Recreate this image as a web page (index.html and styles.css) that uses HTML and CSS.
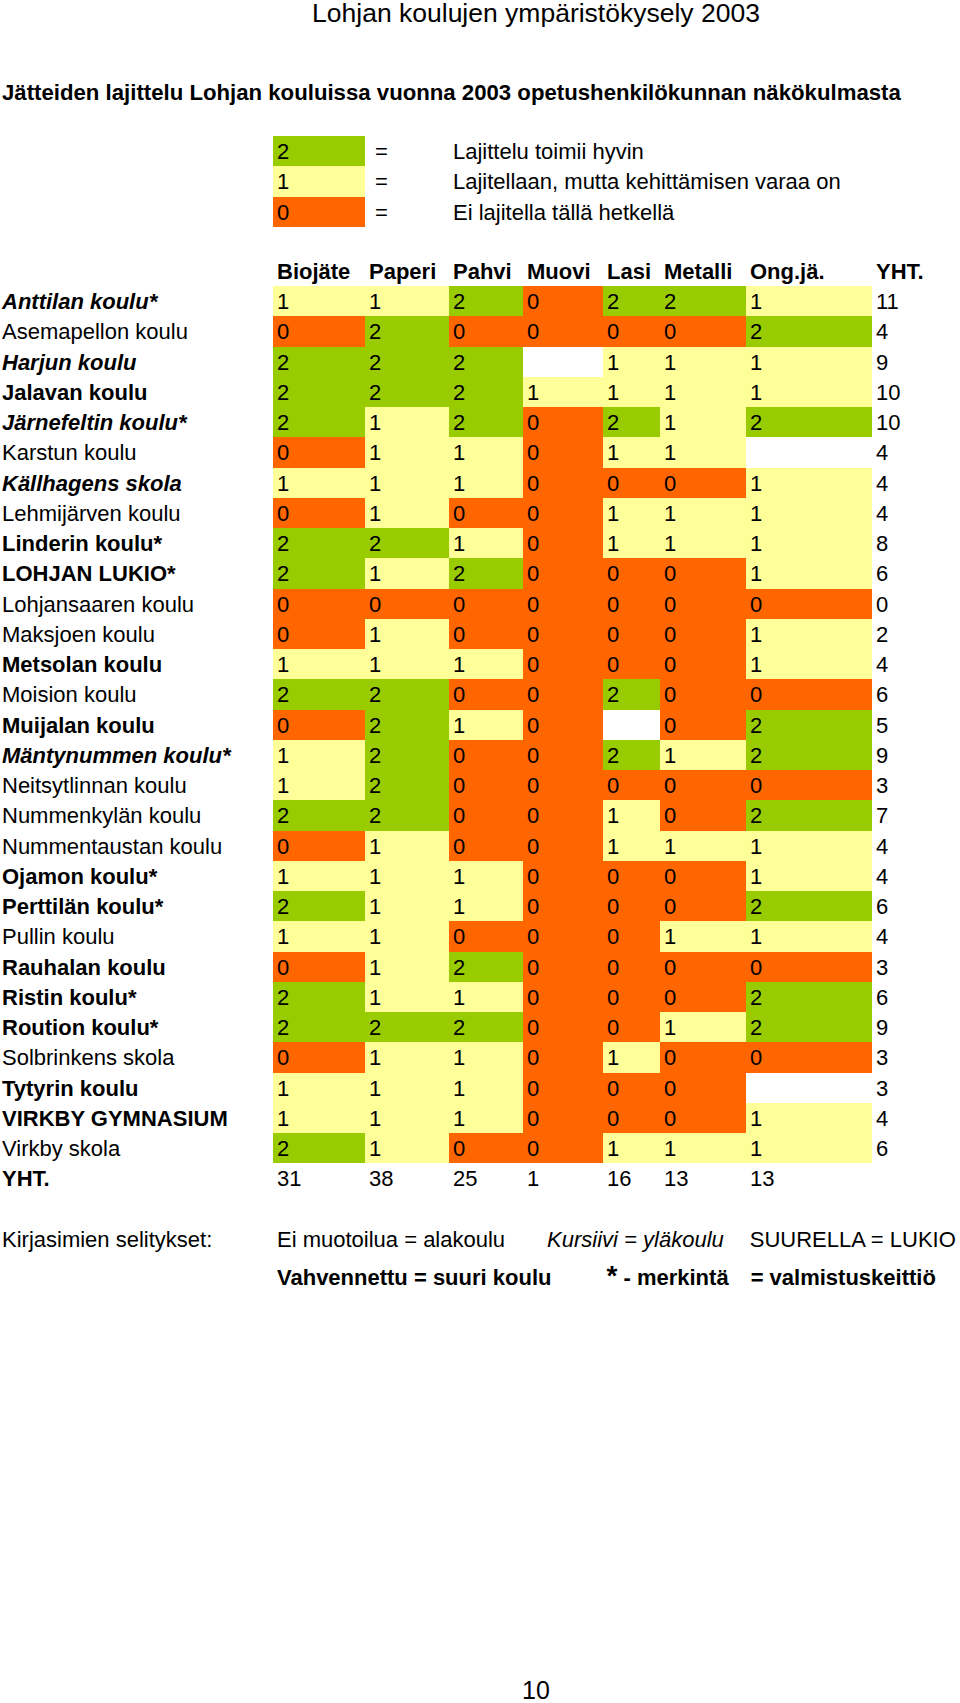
FILE: index.html
```html
<!DOCTYPE html>
<html lang="fi">
<head>
<meta charset="utf-8">
<title>Lohjan koulujen ympäristökysely 2003</title>
<link rel="stylesheet" href="styles.css">
</head>
<body>
<div class="page">
  <h1 class="title">Lohjan koulujen ympäristökysely 2003</h1>
  <h2 class="heading">Jätteiden lajittelu Lohjan kouluissa vuonna 2003 opetushenkilökunnan näkökulmasta</h2>

  <div class="legend">
    <div class="sw g">2</div><div class="eq">=</div><div class="lt">Lajittelu toimii hyvin</div>
    <div class="sw y">1</div><div class="eq">=</div><div class="lt">Lajitellaan, mutta kehittämisen varaa on</div>
    <div class="sw o">0</div><div class="eq">=</div><div class="lt">Ei lajitella tällä hetkellä</div>
  </div>

  <table class="data">
    <colgroup>
      <col class="c-name"><col class="c-bio"><col class="c-pap"><col class="c-pah"><col class="c-muo"><col class="c-las"><col class="c-met"><col class="c-ong"><col class="c-yht">
    </colgroup>
    <thead>
      <tr><th></th><th>Biojäte</th><th>Paperi</th><th>Pahvi</th><th>Muovi</th><th>Lasi</th><th>Metalli</th><th>Ong.jä.</th><th>YHT.</th></tr>
    </thead>
    <tbody>
      <tr><td class="bi">Anttilan koulu*</td><td class="y">1</td><td class="y">1</td><td class="g">2</td><td class="o">0</td><td class="g">2</td><td class="g">2</td><td class="y">1</td><td>11</td></tr>
      <tr><td>Asemapellon koulu</td><td class="o">0</td><td class="g">2</td><td class="o">0</td><td class="o">0</td><td class="o">0</td><td class="o">0</td><td class="g">2</td><td>4</td></tr>
      <tr><td class="bi">Harjun koulu</td><td class="g">2</td><td class="g">2</td><td class="g">2</td><td></td><td class="y">1</td><td class="y">1</td><td class="y">1</td><td>9</td></tr>
      <tr><td class="b">Jalavan koulu</td><td class="g">2</td><td class="g">2</td><td class="g">2</td><td class="y">1</td><td class="y">1</td><td class="y">1</td><td class="y">1</td><td>10</td></tr>
      <tr><td class="bi">Järnefeltin koulu*</td><td class="g">2</td><td class="y">1</td><td class="g">2</td><td class="o">0</td><td class="g">2</td><td class="y">1</td><td class="g">2</td><td>10</td></tr>
      <tr><td>Karstun koulu</td><td class="o">0</td><td class="y">1</td><td class="y">1</td><td class="o">0</td><td class="y">1</td><td class="y">1</td><td></td><td>4</td></tr>
      <tr><td class="bi">Källhagens skola</td><td class="y">1</td><td class="y">1</td><td class="y">1</td><td class="o">0</td><td class="o">0</td><td class="o">0</td><td class="y">1</td><td>4</td></tr>
      <tr><td>Lehmijärven koulu</td><td class="o">0</td><td class="y">1</td><td class="o">0</td><td class="o">0</td><td class="y">1</td><td class="y">1</td><td class="y">1</td><td>4</td></tr>
      <tr><td class="b">Linderin koulu*</td><td class="g">2</td><td class="g">2</td><td class="y">1</td><td class="o">0</td><td class="y">1</td><td class="y">1</td><td class="y">1</td><td>8</td></tr>
      <tr><td class="b">LOHJAN LUKIO*</td><td class="g">2</td><td class="y">1</td><td class="g">2</td><td class="o">0</td><td class="o">0</td><td class="o">0</td><td class="y">1</td><td>6</td></tr>
      <tr><td>Lohjansaaren koulu</td><td class="o">0</td><td class="o">0</td><td class="o">0</td><td class="o">0</td><td class="o">0</td><td class="o">0</td><td class="o">0</td><td>0</td></tr>
      <tr><td>Maksjoen koulu</td><td class="o">0</td><td class="y">1</td><td class="o">0</td><td class="o">0</td><td class="o">0</td><td class="o">0</td><td class="y">1</td><td>2</td></tr>
      <tr><td class="b">Metsolan koulu</td><td class="y">1</td><td class="y">1</td><td class="y">1</td><td class="o">0</td><td class="o">0</td><td class="o">0</td><td class="y">1</td><td>4</td></tr>
      <tr><td>Moision koulu</td><td class="g">2</td><td class="g">2</td><td class="o">0</td><td class="o">0</td><td class="g">2</td><td class="o">0</td><td class="o">0</td><td>6</td></tr>
      <tr><td class="b">Muijalan koulu</td><td class="o">0</td><td class="g">2</td><td class="y">1</td><td class="o">0</td><td></td><td class="o">0</td><td class="g">2</td><td>5</td></tr>
      <tr><td class="bi">Mäntynummen koulu*</td><td class="y">1</td><td class="g">2</td><td class="o">0</td><td class="o">0</td><td class="g">2</td><td class="y">1</td><td class="g">2</td><td>9</td></tr>
      <tr><td>Neitsytlinnan koulu</td><td class="y">1</td><td class="g">2</td><td class="o">0</td><td class="o">0</td><td class="o">0</td><td class="o">0</td><td class="o">0</td><td>3</td></tr>
      <tr><td>Nummenkylän koulu</td><td class="g">2</td><td class="g">2</td><td class="o">0</td><td class="o">0</td><td class="y">1</td><td class="o">0</td><td class="g">2</td><td>7</td></tr>
      <tr><td>Nummentaustan koulu</td><td class="o">0</td><td class="y">1</td><td class="o">0</td><td class="o">0</td><td class="y">1</td><td class="y">1</td><td class="y">1</td><td>4</td></tr>
      <tr><td class="b">Ojamon koulu*</td><td class="y">1</td><td class="y">1</td><td class="y">1</td><td class="o">0</td><td class="o">0</td><td class="o">0</td><td class="y">1</td><td>4</td></tr>
      <tr><td class="b">Perttilän koulu*</td><td class="g">2</td><td class="y">1</td><td class="y">1</td><td class="o">0</td><td class="o">0</td><td class="o">0</td><td class="g">2</td><td>6</td></tr>
      <tr><td>Pullin koulu</td><td class="y">1</td><td class="y">1</td><td class="o">0</td><td class="o">0</td><td class="o">0</td><td class="y">1</td><td class="y">1</td><td>4</td></tr>
      <tr><td class="b">Rauhalan koulu</td><td class="o">0</td><td class="y">1</td><td class="g">2</td><td class="o">0</td><td class="o">0</td><td class="o">0</td><td class="o">0</td><td>3</td></tr>
      <tr><td class="b">Ristin koulu*</td><td class="g">2</td><td class="y">1</td><td class="y">1</td><td class="o">0</td><td class="o">0</td><td class="o">0</td><td class="g">2</td><td>6</td></tr>
      <tr><td class="b">Roution koulu*</td><td class="g">2</td><td class="g">2</td><td class="g">2</td><td class="o">0</td><td class="o">0</td><td class="y">1</td><td class="g">2</td><td>9</td></tr>
      <tr><td>Solbrinkens skola</td><td class="o">0</td><td class="y">1</td><td class="y">1</td><td class="o">0</td><td class="y">1</td><td class="o">0</td><td class="o">0</td><td>3</td></tr>
      <tr><td class="b">Tytyrin koulu</td><td class="y">1</td><td class="y">1</td><td class="y">1</td><td class="o">0</td><td class="o">0</td><td class="o">0</td><td></td><td>3</td></tr>
      <tr><td class="b">VIRKBY GYMNASIUM</td><td class="y">1</td><td class="y">1</td><td class="y">1</td><td class="o">0</td><td class="o">0</td><td class="o">0</td><td class="y">1</td><td>4</td></tr>
      <tr><td>Virkby skola</td><td class="g">2</td><td class="y">1</td><td class="o">0</td><td class="o">0</td><td class="y">1</td><td class="y">1</td><td class="y">1</td><td>6</td></tr>
    </tbody>
    <tfoot>
      <tr><td class="b">YHT.</td><td>31</td><td>38</td><td>25</td><td>1</td><td>16</td><td>13</td><td>13</td><td></td></tr>
    </tfoot>
  </table>

  <div class="notes">
    <div class="notes-label">Kirjasimien selitykset:</div>
    <div class="notes-line">
      <span>Ei muotoilua = alakoulu</span>
      <span class="n-italic">Kursiivi = yläkoulu</span>
      <span class="n-caps">SUURELLA = LUKIO</span>
    </div>
    <div class="notes-line line2">
      <span class="n-bold">Vahvennettu = suuri koulu</span>
      <span class="n-bold n-star"><span class="star">*</span> - merkintä</span>
      <span class="n-bold n-kitchen">= valmistuskeittiö</span>
    </div>
  </div>

  <div class="pagenum">10</div>
</div>
</body>
</html>
```

FILE: styles.css
```css
html, body {
  margin: 0;
  padding: 0;
  background: #ffffff;
}

body {
  font-family: "Liberation Sans", Arial, Helvetica, sans-serif;
  color: #000000;
  width: 960px;
}

.page {
  width: 960px;
}

.title {
  margin: 0;
  padding-left: 112px;
  text-align: center;
  font-size: 26.5px;
  font-weight: normal;
  line-height: 27px;
  height: 27px;
}

.heading {
  margin: 53px 0 0 0;
  padding-left: 2px;
  font-size: 22.2px;
  font-weight: bold;
  line-height: 26px;
  white-space: nowrap;
}

/* Legend shares the table's column grid */
.legend {
  display: grid;
  grid-template-columns: 273px 92px 84px 1fr;
  grid-auto-rows: 30.25px;
  margin-top: 30px;
  font-size: 22px;
}

.legend > div {
  padding-top: 2px;
  line-height: 28.25px;
}

.legend .sw {
  grid-column: 2;
  padding-left: 4px;
}

.legend .eq {
  padding-left: 10px;
}

.legend .lt {
  padding-left: 4px;
  white-space: nowrap;
}

.g { background: #99cc00; }
.y { background: #ffff99; }
.o { background: #ff6600; }

/* Data table */
.data {
  margin-top: 29px;
  border-collapse: collapse;
  border-spacing: 0;
  table-layout: fixed;
  width: 960px;
  font-size: 22px;
}

.c-name { width: 273px; }
.c-bio  { width: 92px; }
.c-pap  { width: 84px; }
.c-pah  { width: 74px; }
.c-muo  { width: 80px; }
.c-las  { width: 57px; }
.c-met  { width: 86px; }
.c-ong  { width: 126px; }
.c-yht  { width: 88px; }

.data tr {
  height: 30.25px;
}

.data th,
.data td {
  padding: 2px 0 0 4px;
  height: 28.25px;
  line-height: 28.25px;
  text-align: left;
  vertical-align: top;
  white-space: nowrap;
  box-sizing: content-box;
}

.data th {
  font-weight: bold;
}

.data td:first-child {
  padding-left: 2px;
}

.data .b { font-weight: bold; }
.data .bi { font-weight: bold; font-style: italic; }

/* Notes */
.notes {
  display: grid;
  grid-template-columns: 273px 1fr;
  margin-top: 27px;
  font-size: 22px;
  line-height: 38px;
}

.notes-label {
  padding-left: 2px;
  white-space: nowrap;
}

.notes-line {
  grid-column: 2;
  padding-left: 4px;
  display: flex;
  white-space: nowrap;
}

.n-italic {
  font-style: italic;
  margin-left: 42px;
}

.n-caps {
  margin-left: 26px;
}

.n-bold {
  font-weight: bold;
}

.n-star {
  margin-left: 55px;
}

.star {
  font-size: 28px;
  line-height: 20px;
  vertical-align: 0;
}

.n-kitchen {
  margin-left: 22px;
}

.pagenum {
  margin-top: 379px;
  padding-left: 112px;
  text-align: center;
  font-size: 25px;
  line-height: 28px;
}
```
